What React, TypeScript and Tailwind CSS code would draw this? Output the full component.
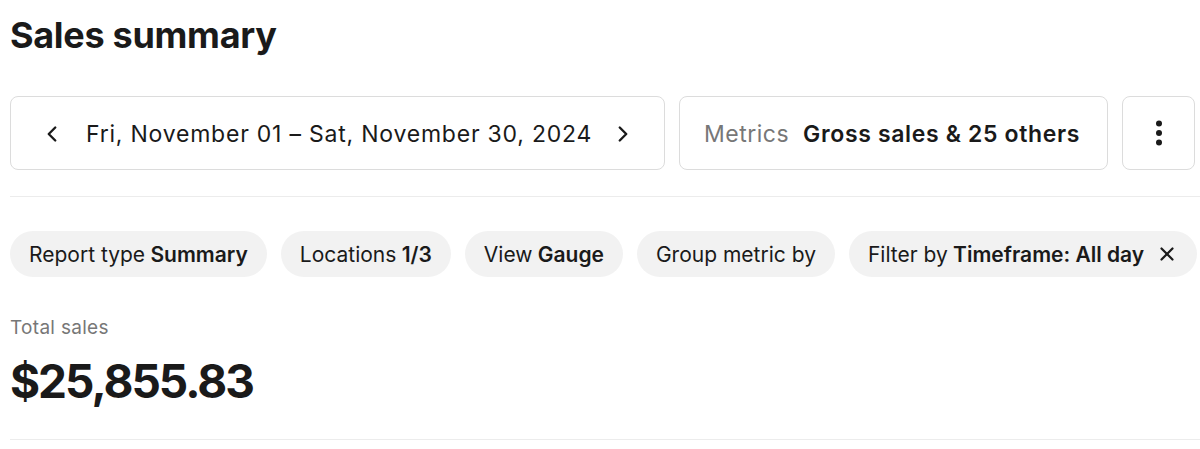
import { ChevronLeft, ChevronRight, X } from 'lucide-react';

type Chip = {
  label: string;
  value?: string;
  clearable?: boolean;
};

const chips: Chip[] = [
  { label: 'Report type', value: 'Summary' },
  { label: 'Locations', value: '1/3' },
  { label: 'View', value: 'Gauge' },
  { label: 'Group metric by' },
  { label: 'Filter by', value: 'Timeframe: All day', clearable: true },
];

function KebabIcon() {
  return (
    <svg width="8" height="28" viewBox="0 0 8 28" fill="#1a1a1a">
      <circle cx="4" cy="4.5" r="3" />
      <circle cx="4" cy="14" r="3" />
      <circle cx="4" cy="23.5" r="3" />
    </svg>
  );
}

export default function App() {
  return (
    <div
      className="min-h-screen bg-white pl-[10px] pt-[13px] text-[#1a1a1a]"
      style={{ fontFamily: 'Inter, "Noto Sans", sans-serif' }}
    >
      <h1 className="text-[36px] leading-[44px] font-bold tracking-[-0.3px]">Sales summary</h1>

      <div className="mt-[39px] flex gap-[14px]">
        <div className="flex h-[74px] w-[655px] items-center justify-between rounded-[8px] border border-[#dcdcdc] px-[28px] pt-[2px]">
          <div className="flex items-center gap-[21px]">
            <ChevronLeft size={26} strokeWidth={2.2} className="shrink-0" />
            <span className="text-[23px] leading-none tracking-[0.78px] whitespace-nowrap">
              Fri, November 01 – Sat, November 30, 2024
            </span>
          </div>
          <ChevronRight size={26} strokeWidth={2.2} className="shrink-0" />
        </div>

        <div className="flex h-[74px] w-[429px] items-center gap-[14px] rounded-[8px] border border-[#dcdcdc] px-[24px] pt-[2px]">
          <span className="text-[23px] leading-none tracking-[0.5px] text-[#777777]">Metrics</span>
          <span className="text-[23px] leading-none font-semibold tracking-[0.65px] whitespace-nowrap">
            Gross sales &amp; 25 others
          </span>
        </div>

        <div className="flex h-[74px] w-[73px] items-center justify-center rounded-[8px] border border-[#dcdcdc]">
          <KebabIcon />
        </div>
      </div>

      <div className="mt-[26px] h-px bg-[#ececec]" />

      <div className="mt-[34px] flex gap-[14px]">
        {chips.map((chip) => (
          <div
            key={chip.label}
            className="flex h-[46px] items-center gap-[12px] rounded-full bg-[#f2f2f2] px-[19px] text-[21px] leading-none whitespace-nowrap"
          >
            <span>
              {chip.label}
              {chip.value && <span className="font-semibold"> {chip.value}</span>}
            </span>
            {chip.clearable && <X size={22} strokeWidth={2.4} />}
          </div>
        ))}
      </div>

      <div className="mt-[40px] text-[19px] leading-[22px] tracking-[0.3px] text-[#777777]">Total sales</div>
      <div className="mt-[14px] text-[46px] leading-[56px] font-bold tracking-[-2px]">$25,855.83</div>

      <div className="mt-[30px] h-px bg-[#ececec]" />
    </div>
  );
}
